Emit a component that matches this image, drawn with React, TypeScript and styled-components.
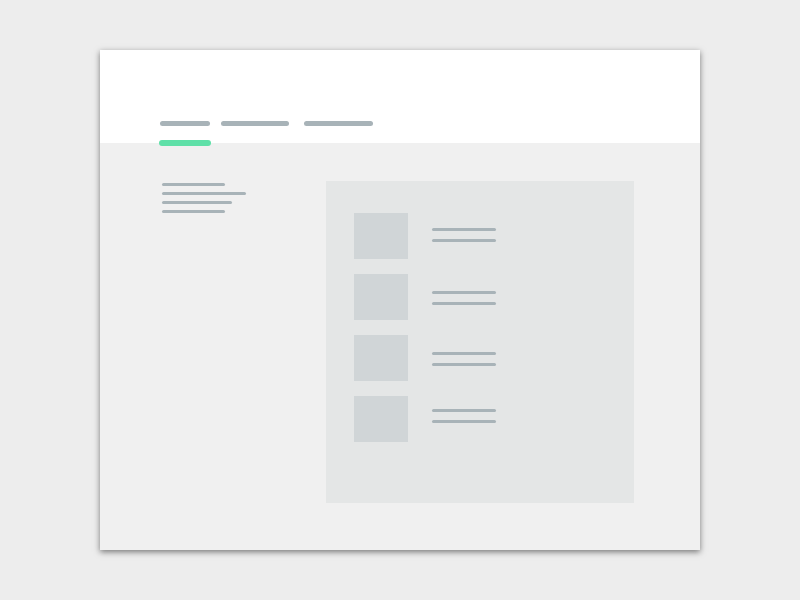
import React from "react";
import styled, { createGlobalStyle } from "styled-components";

const Global = createGlobalStyle`
  html, body { margin: 0; padding: 0; background: #ededed; }
  #root { width: 800px; height: 600px; }
`;

const Stage = styled.div`
  width: 800px;
  height: 600px;
  background: #ededed;
  display: flex;
  justify-content: center;
  padding-top: 50px;
  box-sizing: border-box;
`;

const Window = styled.div`
  width: 600px;
  height: 500px;
  background: #f0f0f0;
  box-shadow: 0 2px 6px rgba(0, 0, 0, 0.5);
  display: flex;
  flex-direction: column;
`;

const Header = styled.div`
  height: 93px;
  background: #ffffff;
  position: relative;
  display: flex;
  align-items: flex-start;
  padding: 71px 0 0 60px;
  box-sizing: border-box;
  gap: 11px;
`;

const Tab = styled.div<{ w: number; ml?: number }>`
  width: ${(p) => p.w}px;
  height: 5px;
  border-radius: 3px;
  background: #a8b3b8;
  margin-left: ${(p) => p.ml ?? 0}px;
`;

const Indicator = styled.div`
  position: absolute;
  left: 59px;
  top: 90px;
  width: 52px;
  height: 6px;
  border-radius: 3px;
  background: #5fe0a8;
`;

const Body = styled.div`
  flex: 1;
  display: flex;
  padding: 38px 0 0 62px;
  box-sizing: border-box;
`;

const TextBlock = styled.div`
  width: 164px;
  display: flex;
  flex-direction: column;
  gap: 6px;
  padding-top: 2px;
`;

const TextLine = styled.div<{ w: number }>`
  width: ${(p) => p.w}px;
  height: 3px;
  border-radius: 2px;
  background: #a8b3b8;
`;

const Panel = styled.div`
  width: 308px;
  height: 322px;
  background: #e4e6e6;
  display: flex;
  flex-direction: column;
  gap: 15px;
  padding: 32px 0 0 28px;
  box-sizing: border-box;
`;

const Row = styled.div`
  display: flex;
  align-items: center;
  gap: 24px;
`;

const Thumb = styled.div`
  width: 54px;
  height: 46px;
  background: #d0d5d7;
`;

const Lines = styled.div<{ shift: number }>`
  display: flex;
  flex-direction: column;
  gap: 8px;
  transform: translateY(${(p) => p.shift}px);
`;

const RowLine = styled.div`
  width: 64px;
  height: 3px;
  border-radius: 2px;
  background: #a8b3b8;
`;

export default function App() {
  const shifts = [-1, 1, 1, -3];
  return (
    <>
      <Global />
      <Stage>
        <Window>
          <Header>
            <Tab w={50} />
            <Tab w={68} />
            <Tab w={69} ml={4} />
            <Indicator />
          </Header>
          <Body>
            <TextBlock>
              <TextLine w={63} />
              <TextLine w={84} />
              <TextLine w={70} />
              <TextLine w={63} />
            </TextBlock>
            <Panel>
              {shifts.map((s, i) => (
                <Row key={i}>
                  <Thumb />
                  <Lines shift={s}>
                    <RowLine />
                    <RowLine />
                  </Lines>
                </Row>
              ))}
            </Panel>
          </Body>
        </Window>
      </Stage>
    </>
  );
}
